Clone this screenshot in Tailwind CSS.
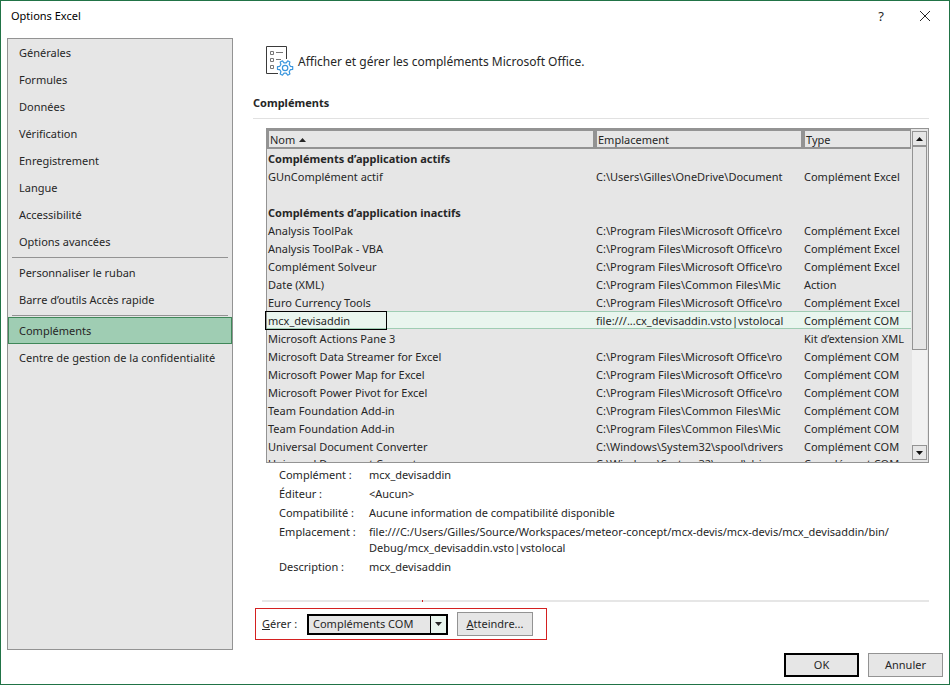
<!DOCTYPE html>
<html lang="fr">
<head>
  <meta charset="UTF-8" />
  <meta name="viewport" content="width=device-width, initial-scale=1.0" />
  <title>Options Excel</title>
  <script src="https://cdn.jsdelivr.net/npm/@tailwindcss/browser@4"></script>
</head>
<body class="min-h-screen flex flex-col border border-[#217346] bg-white font-['Noto_Sans',sans-serif] text-[11px] leading-4 text-[#262626]">

  <header class="flex items-center justify-between h-[30px] pl-[10px] pr-[18px] mb-[7px]">
    <h1 class="text-black">Options Excel</h1>
    <div class="flex items-center gap-8">
      <button type="button" aria-label="Aide" class="w-3 text-[13px]">?</button>
      <button type="button" aria-label="Fermer">
        <svg class="w-3 h-3" viewBox="0 0 12 12" fill="none" stroke="#262626"><path d="M1 1l10 10M11 1L1 11" /></svg>
      </button>
    </div>
  </header>

  <div class="flex flex-1 gap-5 pl-[6px] pr-5">
    <nav class="w-[226px] shrink-0 border border-[#939393] bg-[#e6e6e6]">
      <a href="#" class="flex items-center h-[27px] px-[11px]">Générales</a>
      <a href="#" class="flex items-center h-[27px] px-[11px]">Formules</a>
      <a href="#" class="flex items-center h-[27px] px-[11px]">Données</a>
      <a href="#" class="flex items-center h-[27px] px-[11px]">Vérification</a>
      <a href="#" class="flex items-center h-[27px] px-[11px]">Enregistrement</a>
      <a href="#" class="flex items-center h-[27px] px-[11px]">Langue</a>
      <a href="#" class="flex items-center h-[27px] px-[11px]">Accessibilité</a>
      <a href="#" class="flex items-center h-[27px] px-[11px]">Options avancées</a>
      <hr class="mx-1 mt-[2px] mb-px border-[#939393]">
      <a href="#" class="flex items-center h-[27px] px-[11px]">Personnaliser le ruban</a>
      <a href="#" class="flex items-center h-[27px] px-[11px]">Barre d’outils Accès rapide</a>
      <hr class="mx-1 mt-[2px] mb-px border-[#939393]">
      <a href="#" aria-current="page" class="flex items-center h-[27px] px-[10px] border border-[#3f8759] bg-[#9fcdb3]">Compléments</a>
      <a href="#" class="flex items-center h-[27px] px-[11px]">Centre de gestion de la confidentialité</a>
    </nav>

    <main class="flex-1 min-w-0">
      <div class="flex items-center gap-1 h-12 pl-[13px]">
        <svg class="w-7 h-8 shrink-0" viewBox="0 0 28 32" fill="none">
          <path d="M20.500 13V.5H.5v27H12" stroke="#3a3a3a" />
          <path d="M4.500 5.500h3v3h-3zM4.500 12.500h3v3h-3zM4.500 19.500h3v3h-3zM10 6.500h7M10 13.500h5" stroke="#777" />
          <path d="M16.500 14.800L18 16.800H20.200L21.700 14.800L23.900 16L23.200 18.400L24.400 20.300L26.700 20.600V23.300L24.400 23.700L23.200 25.600L23.900 28L21.700 29.200L20.200 27.200H18L16.500 29.200L14.200 28L14.900 25.600L13.800 23.700L11.500 23.300V20.600L13.800 20.300L14.900 18.400L14.200 16Z" stroke="#3a96dd" stroke-width="1.200" stroke-linejoin="round" fill="#fff" />
          <circle cx="19.100" cy="22" r="2.700" stroke="#3a96dd" stroke-width="1.200" />
        </svg>
        <p class="text-[12px]">Afficher et gérer les compléments Microsoft Office.</p>
      </div>

      <h2 class="mt-[9px] pb-[7px] border-b border-[#e1e1e1] font-bold">Compléments</h2>

      <div class="flex h-[335px] mt-[9px] ml-[13px] border border-[#939393] bg-[#e6e6e6]">
        <div class="flex-1 min-w-0 h-full overflow-y-clip">
          <table class="w-full table-fixed border-separate border-spacing-0 text-left whitespace-nowrap">
            <colgroup><col><col class="w-[208px]"><col class="w-[108px]"></colgroup>
            <thead>
              <tr class="h-5 leading-[15px]">
                <th class="p-0 pt-px pl-px border-2 border-[#939393] font-normal">Nom <svg class="inline w-[7px] h-1 mb-[2px] ml-px" viewBox="0 0 7 4"><path d="M0 4L3.500 0 7 4z" fill="#262626" /></svg></th>
                <th class="p-0 pt-px pl-px border-2 border-[#939393] font-normal">Emplacement</th>
                <th class="p-0 pt-px pl-px border-2 border-r border-[#939393] font-normal">Type</th>
              </tr>
            </thead>
            <tbody>
              <tr class="h-[18px]"><th colspan="3" class="p-0 pt-px pl-px font-bold">Compléments d’application actifs</th></tr>
              <tr class="h-[18px]"><td class="p-0 pt-px pl-px">GUnComplément actif</td><td class="p-0 pt-px pl-px">C:\Users\Gilles\OneDrive\Document</td><td class="p-0 pt-px pl-px">Complément Excel</td></tr>
              <tr class="h-[18px]"><td colspan="3"></td></tr>
              <tr class="h-[18px]"><th colspan="3" class="p-0 pt-px pl-px font-bold">Compléments d’application inactifs</th></tr>
              <tr class="h-[18px]"><td class="p-0 pt-px pl-px">Analysis ToolPak</td><td class="p-0 pt-px pl-px">C:\Program Files\Microsoft Office\ro</td><td class="p-0 pt-px pl-px">Complément Excel</td></tr>
              <tr class="h-[18px]"><td class="p-0 pt-px pl-px">Analysis ToolPak - VBA</td><td class="p-0 pt-px pl-px">C:\Program Files\Microsoft Office\ro</td><td class="p-0 pt-px pl-px">Complément Excel</td></tr>
              <tr class="h-[18px]"><td class="p-0 pt-px pl-px">Complément Solveur</td><td class="p-0 pt-px pl-px">C:\Program Files\Microsoft Office\ro</td><td class="p-0 pt-px pl-px">Complément Excel</td></tr>
              <tr class="h-[18px]"><td class="p-0 pt-px pl-px">Date (XML)</td><td class="p-0 pt-px pl-px">C:\Program Files\Common Files\Mic</td><td class="p-0 pt-px pl-px">Action</td></tr>
              <tr class="h-[18px]"><td class="p-0 pt-px pl-px">Euro Currency Tools</td><td class="p-0 pt-px pl-px">C:\Program Files\Microsoft Office\ro</td><td class="p-0 pt-px pl-px">Complément Excel</td></tr>
              <tr class="h-[18px] leading-[15px] bg-[#e9f5ee]">
                <td class="relative p-0 pt-px pl-px border-y border-[#9fcdb3]">mcx_devisaddin<span class="absolute -left-[2px] -top-px w-[122px] h-[19px] border border-black"></span></td>
                <td class="p-0 pt-px pl-px border-y border-[#9fcdb3]">file:///...cx_devisaddin.vsto|vstolocal</td>
                <td class="p-0 pt-px pl-px border-y border-[#9fcdb3]">Complément COM</td>
              </tr>
              <tr class="h-[18px]"><td class="p-0 pt-px pl-px">Microsoft Actions Pane 3</td><td></td><td class="p-0 pt-px pl-px">Kit d’extension XML</td></tr>
              <tr class="h-[18px]"><td class="p-0 pt-px pl-px">Microsoft Data Streamer for Excel</td><td class="p-0 pt-px pl-px">C:\Program Files\Microsoft Office\ro</td><td class="p-0 pt-px pl-px">Complément COM</td></tr>
              <tr class="h-[18px]"><td class="p-0 pt-px pl-px">Microsoft Power Map for Excel</td><td class="p-0 pt-px pl-px">C:\Program Files\Microsoft Office\ro</td><td class="p-0 pt-px pl-px">Complément COM</td></tr>
              <tr class="h-[18px]"><td class="p-0 pt-px pl-px">Microsoft Power Pivot for Excel</td><td class="p-0 pt-px pl-px">C:\Program Files\Microsoft Office\ro</td><td class="p-0 pt-px pl-px">Complément COM</td></tr>
              <tr class="h-[18px]"><td class="p-0 pt-px pl-px">Team Foundation Add-in</td><td class="p-0 pt-px pl-px">C:\Program Files\Common Files\Mic</td><td class="p-0 pt-px pl-px">Complément COM</td></tr>
              <tr class="h-[18px]"><td class="p-0 pt-px pl-px">Team Foundation Add-in</td><td class="p-0 pt-px pl-px">C:\Program Files\Common Files\Mic</td><td class="p-0 pt-px pl-px">Complément COM</td></tr>
              <tr class="h-[18px]"><td class="p-0 pt-px pl-px">Universal Document Converter</td><td class="p-0 pt-px pl-px">C:\Windows\System32\spool\drivers</td><td class="p-0 pt-px pl-px">Complément COM</td></tr>
              <tr class="h-[18px]"><td class="p-0 pl-px">Universal Document Converter</td><td class="p-0 pl-px">C:\Windows\System32\spool\drivers</td><td class="p-0 pl-px">Complément COM</td></tr>
            </tbody>
          </table>
        </div>
        <!-- scroll bar -->
        <div class="flex flex-col w-[15px] shrink-0 mt-[2px] mb-[2px] ml-px mr-px bg-[#f1f1f1]">
          <button type="button" aria-label="Défiler vers le haut" class="flex items-center justify-center h-[15px] border border-[#939393] bg-[#e6e6e6]">
            <svg class="w-[7px] h-1" viewBox="0 0 7 4"><path d="M0 4L3.500 0 7 4z" fill="#111" /></svg>
          </button>
          <div class="h-[204px] border border-[#939393] bg-[#e6e6e6]"></div>
          <button type="button" aria-label="Défiler vers le bas" class="flex items-center justify-center h-[15px] mt-auto border border-[#939393] bg-[#e6e6e6]">
            <svg class="w-[7px] h-1" viewBox="0 0 7 4"><path d="M0 0h7L3.500 4z" fill="#111" /></svg>
          </button>
        </div>
      </div>

      <dl class="grid grid-cols-[90px_1fr] gap-y-[3px] mt-1 pl-[26px]">
        <dt>Complément :</dt><dd>mcx_devisaddin</dd>
        <dt>Éditeur :</dt><dd>&lt;Aucun&gt;</dd>
        <dt>Compatibilité :</dt><dd>Aucune information de compatibilité disponible</dd>
        <dt>Emplacement :</dt><dd>file:///C:/Users/Gilles/Source/Workspaces/meteor-concept/mcx-devis/mcx-devis/mcx_devisaddin/bin/<br>Debug/mcx_devisaddin.vsto|vstolocal</dd>
        <dt>Description :</dt><dd>mcx_devisaddin</dd>
      </dl>

      <div class="flex h-[2px] mt-[25px] ml-[9px] pl-40 bg-[#e6e6e6]"><span class="w-px bg-[#d42020]"></span></div>

      <form class="flex items-center w-[292px] h-8 mt-[6px] ml-[2px] pl-[6px] border border-[#d42020]">
        <label for="manage" class="w-[45px]"><u>G</u>érer :</label>
        <div class="relative w-[141px] h-[21px]">
          <select id="manage" class="appearance-none w-full h-full pl-1 border-2 border-black bg-[#e6e6e6]">
            <option>Compléments COM</option>
          </select>
          <span class="absolute top-[2px] right-[2px] bottom-[2px] flex items-center justify-center w-4 border-l border-black bg-[#e9f5ee] pointer-events-none">
            <svg class="w-[7px] h-1" viewBox="0 0 7 4"><path d="M0 0h7L3.500 4z" fill="#262626" /></svg>
          </span>
        </div>
        <button type="button" class="w-[76px] h-6 ml-[9px] border border-[#939393] bg-[#e6e6e6]"><u>A</u>tteindre...</button>
      </form>
    </main>
  </div>

  <footer class="flex justify-end gap-[9px] pt-[3px] pr-[6px] pb-[7px]">
    <button type="button" class="w-[75px] h-6 border-2 border-black bg-[#e6e6e6]">OK</button>
    <button type="button" class="w-[75px] h-6 border border-[#939393] bg-[#e6e6e6]">Annuler</button>
  </footer>

</body>
</html>
